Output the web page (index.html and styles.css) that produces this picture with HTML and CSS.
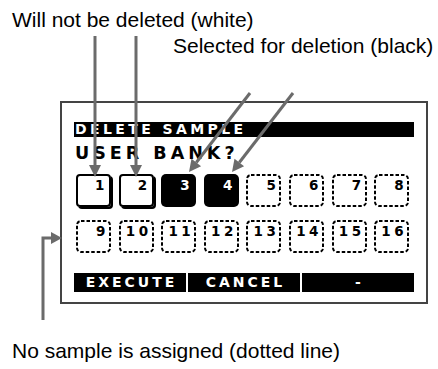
FILE: index.html
```html
<!DOCTYPE html>
<html lang="en">
<head>
    <meta charset="UTF-8">
    <meta name="viewport" content="width=device-width, initial-scale=1.0">
    <title>Delete Sample - User Bank</title>
    <link rel="stylesheet" href="styles.css">
</head>
<body>
    <div id="figure">
        <p class="label label-white">Will not be deleted (white)</p>
        <p class="label label-black">Selected for deletion (black)</p>

        <div id="screen">
            <div class="title-bar">DELETE SAMPLE</div>
            <div class="question">USER BANK?</div>

            <div class="bank-grid">
                <div class="key white"><span>1</span></div>
                <div class="key white"><span>2</span></div>
                <div class="key black"><span>3</span></div>
                <div class="key black"><span>4</span></div>
                <div class="key empty"><svg class="dash" viewBox="0 0 35 33"><rect x="1" y="1" width="33" height="31" rx="4"/></svg><span>5</span></div>
                <div class="key empty"><svg class="dash" viewBox="0 0 35 33"><rect x="1" y="1" width="33" height="31" rx="4"/></svg><span>6</span></div>
                <div class="key empty"><svg class="dash" viewBox="0 0 35 33"><rect x="1" y="1" width="33" height="31" rx="4"/></svg><span>7</span></div>
                <div class="key empty"><svg class="dash" viewBox="0 0 35 33"><rect x="1" y="1" width="33" height="31" rx="4"/></svg><span>8</span></div>
                <div class="key empty"><svg class="dash" viewBox="0 0 35 33"><rect x="1" y="1" width="33" height="31" rx="4"/></svg><span>9</span></div>
                <div class="key empty"><svg class="dash" viewBox="0 0 35 33"><rect x="1" y="1" width="33" height="31" rx="4"/></svg><span>10</span></div>
                <div class="key empty"><svg class="dash" viewBox="0 0 35 33"><rect x="1" y="1" width="33" height="31" rx="4"/></svg><span>11</span></div>
                <div class="key empty"><svg class="dash" viewBox="0 0 35 33"><rect x="1" y="1" width="33" height="31" rx="4"/></svg><span>12</span></div>
                <div class="key empty"><svg class="dash" viewBox="0 0 35 33"><rect x="1" y="1" width="33" height="31" rx="4"/></svg><span>13</span></div>
                <div class="key empty"><svg class="dash" viewBox="0 0 35 33"><rect x="1" y="1" width="33" height="31" rx="4"/></svg><span>14</span></div>
                <div class="key empty"><svg class="dash" viewBox="0 0 35 33"><rect x="1" y="1" width="33" height="31" rx="4"/></svg><span>15</span></div>
                <div class="key empty"><svg class="dash" viewBox="0 0 35 33"><rect x="1" y="1" width="33" height="31" rx="4"/></svg><span>16</span></div>
            </div>

            <div class="soft-keys">
                <div class="soft-key">EXECUTE</div>
                <div class="soft-key">CANCEL</div>
                <div class="soft-key">-</div>
            </div>
        </div>

        <p class="label label-empty">No sample is assigned (dotted line)</p>

        <!-- callout arrows -->
        <svg id="callouts" width="438" height="369" viewBox="0 0 438 369">
            <g class="arrow-line">
                <line x1="95" y1="36" x2="95" y2="166"/>
                <line x1="136" y1="36" x2="136" y2="166"/>
                <line x1="250" y1="93" x2="196.3" y2="162.5"/>
                <line x1="293" y1="93" x2="239.3" y2="162.5"/>
                <path d="M43 320 V238 H52"/>
            </g>
            <g class="arrow-head">
                <polygon points="89,165 101,165 95,177"/>
                <polygon points="130,165 142,165 136,177"/>
                <polygon points="201.1,166.2 191.5,158.8 189,172"/>
                <polygon points="244.1,166.2 234.5,158.8 232,172"/>
                <polygon points="51,232 51,244 62,238"/>
            </g>
        </svg>
    </div>
</body>
</html>
```

FILE: styles.css
```css
body {
    margin: 0;
    padding: 0;
    background-color: #fff;
    color: #000;
    font-family: 'Liberation Sans', Arial, sans-serif;
    overflow: hidden;
}
#figure {
    width: 438px;
    height: 369px;
    position: relative;
    overflow: hidden;
}
.label {
    margin: 0;
    font-size: 21px;
    line-height: 24px;
    white-space: nowrap;
}
.label-white {
    padding: 8px 0 0 12px;
}
.label-black {
    margin-top: 2px;
    padding-left: 173px;
}
.label-empty {
    margin-top: 35px;
    padding-left: 12px;
}

/* LCD panel */
#screen {
    box-sizing: border-box;
    width: 368px;
    height: 203px;
    margin: 43px 0 0 60px;
    padding: 19px 12px 0 12px;
    border: 2px solid #444;
    font-family: 'DejaVu Sans', Verdana, sans-serif;
    font-weight: bold;
}
.title-bar {
    height: 15px;
    line-height: 15px;
    padding-left: 1px;
    background-color: #000;
    color: #fff;
    font-size: 14px;
    letter-spacing: 3.4px;
    white-space: nowrap;
}
.question {
    margin-top: 8px;
    padding-left: 1px;
    font-size: 17.5px;
    line-height: 16px;
    letter-spacing: 4px;
    white-space: nowrap;
}
.bank-grid {
    display: grid;
    grid-template-columns: repeat(8, 35px);
    grid-auto-rows: 33px;
    column-gap: 7.6px;
    row-gap: 13px;
    margin: 13px 0 0 2px;
}
.key {
    position: relative;
    box-sizing: border-box;
    width: 35px;
    height: 33px;
    padding: 5px 2px 0 0;
    text-align: right;
    font-size: 13.5px;
    line-height: 12px;
    letter-spacing: 3.5px;
}
.key span {
    position: relative;
}
.key.white {
    border: 2px solid #000;
    border-radius: 4px;
    box-shadow: 2px 2px 0 #000;
    padding: 3px 1px 0 0;
}
.key.black {
    background-color: #000;
    color: #fff;
    border-radius: 5px;
    padding-right: 3px;
}
.dash {
    position: absolute;
    left: 0;
    top: 0;
    width: 35px;
    height: 33px;
}
.dash rect {
    fill: none;
    stroke: #000;
    stroke-width: 2;
    stroke-dasharray: 3.5 2;
}
.soft-keys {
    display: flex;
    gap: 2px;
    margin-top: 20px;
}
.soft-key {
    flex: 1;
    height: 19px;
    line-height: 19px;
    background-color: #000;
    color: #fff;
    text-align: center;
    font-size: 14px;
    letter-spacing: 3px;
    text-indent: 3px;
}

#callouts {
    position: absolute;
    left: 0;
    top: 0;
    pointer-events: none;
}
.arrow-line line,
.arrow-line path {
    fill: none;
    stroke: #6b6b6b;
    stroke-width: 3;
}
.arrow-head polygon {
    fill: #6b6b6b;
}
```
